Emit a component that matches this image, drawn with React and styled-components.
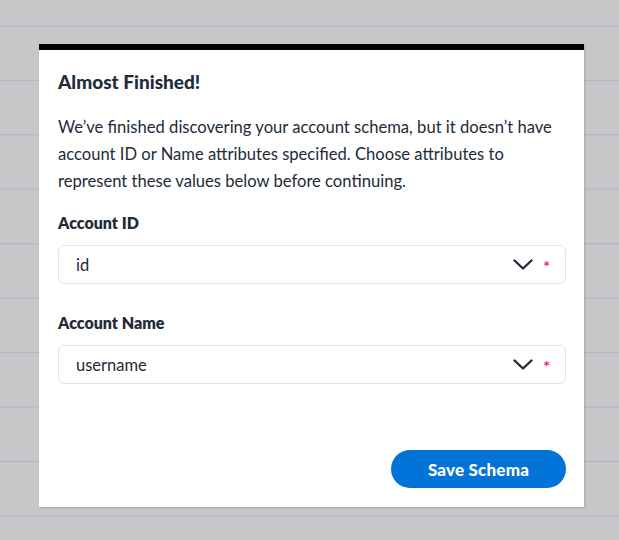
import React from "react";
import styled, { createGlobalStyle } from "styled-components";

const Global = createGlobalStyle`
  html, body { margin: 0; padding: 0; }
  body {
    width: 619px;
    height: 540px;
    overflow: hidden;
    font-family: Lato, "Noto Sans", sans-serif;
    color: #222b38;
    background-color: #c6c7c9;
    background-image: linear-gradient(to bottom, transparent 0, transparent 53.44px, #adb3c0 53.44px, #adb3c0 54.44px);
    background-size: 100% 54.44px;
    background-position: 0 -28px;
  }
`;

const Page = styled.div`
  padding: 44px 0 0 39px;
`;

const Modal = styled.div`
  box-sizing: border-box;
  width: 545px;
  height: 463px;
  background: #fff;
  border-top: 6px solid #000;
  box-shadow: 1px 1px 2px rgba(0,0,0,0.15);
  padding: 20px 18px 19px 19px;
  display: flex;
  flex-direction: column;
`;

const Title = styled.h2`
  margin: 0;
  font-size: 19px;
  line-height: 24px;
  font-weight: 900;
`;

const Text = styled.p`
  margin: 20px 0 0;
  font-size: 16.6px;
  line-height: 27px;
`;

const Label = styled.label`
  display: block;
  margin-top: ${p => p.$top}px;
  font-size: 16px;
  line-height: 24px;
  font-weight: 800;
`;

const Select = styled.div`
  box-sizing: border-box;
  margin-top: 10px;
  height: 39px;
  border: 1px solid #e1e3e7;
  border-radius: 6px;
  display: flex;
  align-items: center;
  padding: 0 15px 0 17px;
  font-size: 16.5px;
`;

const Value = styled.span`
  flex: 1;
`;

const Chevron = styled.svg`
  width: 20px;
  height: 11px;
  margin-right: 10px;
`;

const Star = styled.span`
  color: #e8265e;
  font-size: 16px;
  line-height: 1;
  font-weight: 700;
  margin-top: 3px;
`;

const Footer = styled.div`
  margin-top: auto;
  display: flex;
  justify-content: flex-end;
`;

const Button = styled.button`
  width: 175px;
  height: 38px;
  border: none;
  border-radius: 19px;
  background: #0173d9;
  color: #fff;
  font-family: inherit;
  font-size: 17px;
  font-weight: 900;
  letter-spacing: 0.2px;
  cursor: pointer;
`;

function Field({ label, value, top }) {
  return (
    <>
      <Label $top={top}>{label}</Label>
      <Select>
        <Value>{value}</Value>
        <Chevron viewBox="0 0 20 11" fill="none">
          <path d="M1.5 1.5 L10 9.5 L18.5 1.5" stroke="#222b38" strokeWidth="2.4" strokeLinecap="round" strokeLinejoin="round" />
        </Chevron>
        <Star>*</Star>
      </Select>
    </>
  );
}

export default function App() {
  return (
    <>
      <Global />
      <Page>
        <Modal>
          <Title>Almost Finished!</Title>
          <Text>
            We’ve finished discovering your account schema, but it doesn’t have
            account ID or Name attributes specified. Choose attributes to
            represent these values below before continuing.
          </Text>
          <Field label="Account ID" value="id" top={16} />
          <Field label="Account Name" value="username" top={27} />
          <Footer>
            <Button>Save Schema</Button>
          </Footer>
        </Modal>
      </Page>
    </>
  );
}
